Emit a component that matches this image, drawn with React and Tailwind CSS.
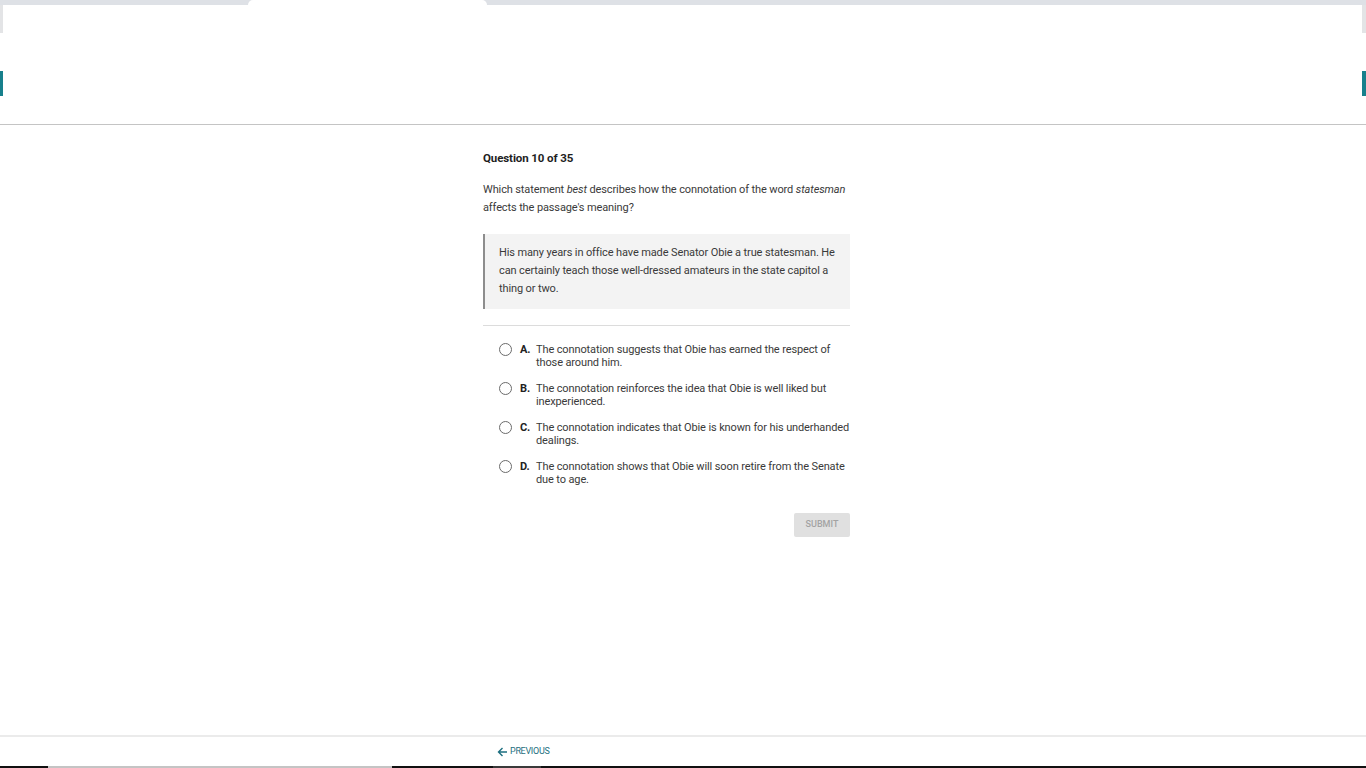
import React from "react";

const options = [
  { letter: "A.", text: "The connotation suggests that Obie has earned the respect of those around him." },
  { letter: "B.", text: "The connotation reinforces the idea that Obie is well liked but inexperienced." },
  { letter: "C.", text: "The connotation indicates that Obie is known for his underhanded dealings." },
  { letter: "D.", text: "The connotation shows that Obie will soon retire from the Senate due to age." },
];

export default function App() {
  return (
    <div className="flex h-screen flex-col bg-white text-[#3a3a3a]" style={{ fontFamily: "Roboto, 'Liberation Sans', sans-serif" }}>
      {/* top strip */}
      <div className="flex h-[5px] bg-[#dee1e6]">
        <div className="ml-[248px] w-[239px] rounded-t-[6px] bg-white" />
      </div>

      {/* header */}
      <div className="flex h-[120px] justify-between border-b border-[#c4c4c4] bg-white">
        <div className="flex w-[3px] flex-col">
          <div className="h-[28px] bg-[#e3e4e6]" />
          <div className="mt-[38px] h-[25px] bg-[#17808c]" />
        </div>
        <div className="flex w-[4px] flex-col">
          <div className="h-[28px] bg-[#e3e4e6]" />
          <div className="mt-[38px] h-[25px] bg-[#17808c]" />
        </div>
      </div>

      {/* main */}
      <main className="flex-1">
        <div className="ml-[483px] w-[367px] pt-[25px]">
          <h1 className="text-[11.5px] font-bold leading-[16px] tracking-[-0.1px] text-[#1e1e1e]">Question 10 of 35</h1>
          <div className="text-[11px] tracking-[-0.12px]">
            <p className="mt-[15px] leading-[18px]">
              Which statement <em>best</em> describes how the connotation of the word <em>statesman</em> affects the passage's meaning?
            </p>
            <div className="mt-[17px] border-l-2 border-[#8d8d8d] bg-[#f3f3f3] pt-[10px] pb-[11px] pl-[14px] pr-[12px] leading-[18px]">
              His many years in office have made Senator Obie a true statesman. He can certainly teach those well-dressed amateurs in the state capitol a thing or two.
            </div>
            <div className="mt-[16px] border-t border-[#dcdcdc]" />
            <ul className="mt-[17px] flex flex-col gap-[13px] pl-[16px]">
              {options.map((o) => (
                <li key={o.letter} className="flex items-start leading-[13px]">
                  <span className="h-[13px] w-[13px] shrink-0 rounded-full border border-[#6b6b6b] bg-white" />
                  <span className="ml-[8px] w-[16px] shrink-0 font-bold text-[#222]">{o.letter}</span>
                  <span>{o.text}</span>
                </li>
              ))}
            </ul>
          </div>
          <div className="mt-[27px] flex justify-end">
            <button className="h-[24px] w-[56px] rounded-[2px] bg-[#e0e0e0] text-[9px] font-medium text-[#a3a3a3]">SUBMIT</button>
          </div>
        </div>
      </main>

      {/* footer */}
      <footer className="flex h-[31px] items-center border-t-2 border-[#ebebeb] bg-white">
        <button className="ml-[497px] flex items-center gap-[2px] text-[9px] tracking-[-0.3px] text-[#1d6f80]">
          <svg width="11" height="10" viewBox="0 0 11 10" fill="none" stroke="#1d6f80" strokeWidth="1.4">
            <path d="M10 5H1.5M5.5 1L1.5 5l4 4" />
          </svg>
          PREVIOUS
        </button>
      </footer>
      <div className="flex h-[2px] bg-[#111]">
        <div className="ml-[48px] w-[344px] bg-[#c4c4c4]" />
        <div className="ml-[101px] w-[48px] bg-[#3a3a3a]" />
      </div>
    </div>
  );
}
